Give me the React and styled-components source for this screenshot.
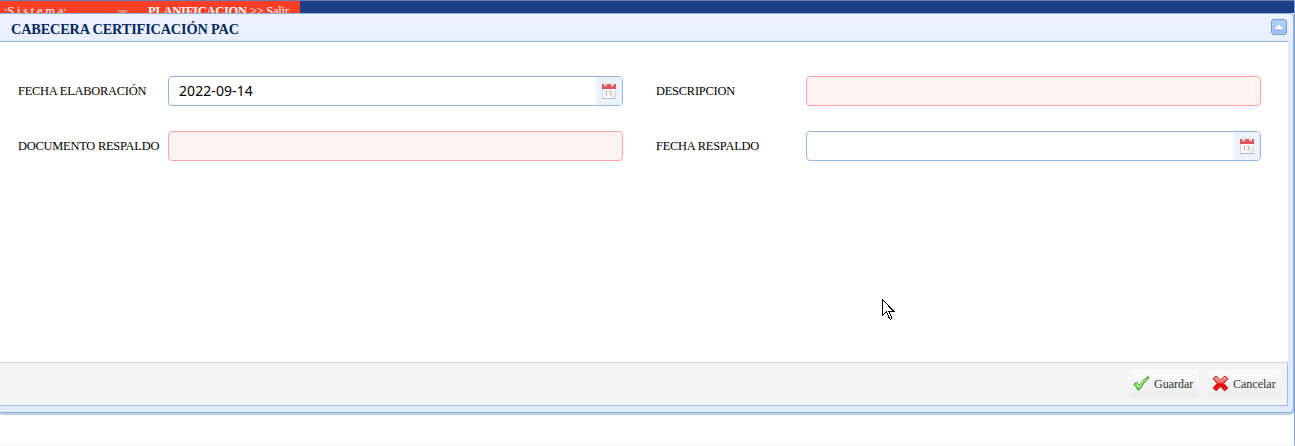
import React from "react";
import styled, { createGlobalStyle } from "styled-components";

const GlobalStyle = createGlobalStyle`
  * { box-sizing: border-box; }
  body { margin: 0; background: #fff; overflow: hidden; font-family: "Liberation Serif", "Times New Roman", serif; }
`;

const Page = styled.div`
  position: relative;
  height: 446px;
  overflow: hidden;
  border-right: 1px solid #7f9fd0;
  border-bottom: 1px solid #f5f5f5;
`;

const TopBar = styled.header`
  height: 13px;
  margin-right: -1px;
  display: flex;
  overflow: hidden;
  background: #1d3f87;
  border-top: 1px solid #6b7fae;
`;

const SystemMenu = styled.div`
  display: flex;
  align-items: flex-start;
  width: 300px;
  padding: 3px 0 0 4px;
  background: #fb3f27;
  color: #fff;
  font-size: 12.5px;
  line-height: 15px;
  white-space: nowrap;
`;

const SystemLabel = styled.span`
  width: 112px;
  letter-spacing: -0.2px;
`;

const Caret = styled.svg`
  width: 11px;
  height: 6px;
  margin: 6px 20px 0 1px;
`;

const ModuleName = styled.span`
  letter-spacing: -0.25px;
`;

const Dialog = styled.section`
  height: 400px;
  margin-right: -1px;
  padding-right: 5px;
  padding-bottom: 6px;
  border: solid #8db2e3;
  border-width: 1px 2px 1px 0;
  border-radius: 0 5px 5px 0;
  background: #dfeaff;
  box-shadow: 0 2px 2px #b9cbd8;
  display: flex;
  flex-direction: column;
`;

const TitleBar = styled.div`
  height: 27px;
  flex: none;
  margin-right: -5px;
  padding: 0 6px 0 11px;
  display: flex;
  justify-content: space-between;
  align-items: center;
  border-radius: 0 4px 0 0;
  background: linear-gradient(#edf3ff, #e7effc);
`;

const Title = styled.h1`
  margin: 2px 0 0;
  font-size: 14.3px;
  letter-spacing: -0.16px;
  line-height: 18px;
  color: #04285c;
  white-space: nowrap;
`;

const CollapseButton = styled.button`
  width: 16px;
  height: 16px;
  margin-top: -1px;
  padding: 0;
  display: flex;
  border: 1px solid #6f9bd3;
  border-radius: 3px;
  background: linear-gradient(#b4d2f7, #91bbed);
  box-shadow: inset 0 0 0 1px #aecdf5;
`;

const Body = styled.div`
  flex: 1;
  background: #fff;
  border-top: 1px solid #8db2e3;
  padding: 34px 26px 0 18px;
`;

const Form = styled.form`
  display: grid;
  grid-template-columns: 605px 605px;
  column-gap: 33px;
  row-gap: 25px;
`;

const Field = styled.div`
  display: flex;
  align-items: center;
  height: 30px;
`;

const Label = styled.label`
  width: 150px;
  flex: none;
  font-size: 12.4px;
  letter-spacing: -0.21px;
  line-height: 16px;
  color: #000;
  white-space: nowrap;
`;

const Control = styled.div`
  display: flex;
  align-items: stretch;
  width: 455px;
  height: 30px;
  overflow: hidden;
  border: 1px solid ${(p) => (p.$required ? "#ffa3a5" : "#91b5e5")};
  border-radius: 4px;
  background: ${(p) => (p.$required ? "#fff2f2" : "#fff")};
`;

const Value = styled.span`
  flex: 1;
  padding-left: 10px;
  font-family: "Noto Sans", "Open Sans", sans-serif;
  font-size: 14px;
  letter-spacing: 0.08px;
  line-height: 28px;
  color: #000;
`;

const CalendarButton = styled.button`
  width: 26px;
  padding: 0 0 0 5px;
  border: 0;
  display: flex;
  align-items: center;
  background: #eaf2ff;
`;

const Footer = styled.footer`
  flex: none;
  height: 44px;
  padding: 0 5px 1px 0;
  display: flex;
  justify-content: flex-end;
  align-items: center;
  gap: 8px;
  background: #f3f3f3;
  border: solid #99bbe8;
  border-width: 1px 1px 1px 0;
  border-top-color: #d9d9d9;
`;

const ActionButton = styled.button`
  width: ${(p) => p.$width}px;
  height: 28px;
  padding: 0 0 0 5px;
  display: flex;
  align-items: center;
  gap: 4px;
  border: 0;
  border-radius: 5px;
  background: linear-gradient(#fbfbfb, #ededed);
  color: #333;
  font: 12px/16px "Liberation Serif", "Times New Roman", serif;
`;

const Pointer = styled.svg`
  position: absolute;
  left: 882px;
  top: 299px;
`;

const CalendarIcon = () => (
  <svg width="16" height="18" viewBox="0 0 16 18">
    <path d="M1 3h14v13H1z" fill="#fafafa" />
    <path d="M1 2h14v5H1z" fill="#e25558" />
    <path d="M1 16h14v1H1z" fill="#bbb7b5" />
    <path d="M1.5 7v9M14.5 7v9" stroke="#dedcdb" strokeWidth="1" />
    <path d="M3 1h3v3H3zM10 1h3v3h-3z" fill="#dedcdd" />
    <path d="M4 3h1v2H4zM11 3h1v2h-1z" fill="#c3a5a9" />
    <path d="M4.5 9.5l1-.5v4.5M7.5 9h3l-1.7 4.5" fill="none" stroke="#b4b4b4" />
    <circle cx="12" cy="13" r="2" fill="#f4f4f4" stroke="#d4d4d4" strokeWidth=".8" />
  </svg>
);

const CheckIcon = () => (
  <svg width="17" height="17" viewBox="0 0 17 17">
    <path d="M.9 9.2 3.7 7.1 6 10.5Q9.5 4.6 15.2 1.5l1.2 1.1Q10.1 7.4 6.9 14.1L5.1 15.2Q3.4 11.6.9 9.2Z" fill="#87e45c" stroke="#329329" strokeLinejoin="round" />
    <path d="m2.7 9 1-.6 2.2 3.4Q9.2 6 13.4 3.4" fill="none" stroke="#caf5a8" />
  </svg>
);

const CrossIcon = () => (
  <svg width="17" height="17" viewBox="0 0 17 17">
    <defs>
      <linearGradient id="cross" x2="0" y2="1">
        <stop stopColor="#ff9b98" />
        <stop offset=".45" stopColor="#f55855" />
        <stop offset=".55" stopColor="#e60000" />
        <stop offset="1" stopColor="#f73030" />
      </linearGradient>
    </defs>
    <path d="m4 1 4.5 4L13 1l3 2.7-4.2 4.7 4.2 4.5-3.2 3-4.3-4.2-4.4 4.2L1 12.8l4.2-4.4L1 3.8Z" fill="url(#cross)" stroke="#ba1c1c" strokeLinejoin="round" />
    <path d="m3.8 2.5 4.7 4 4.6-4" fill="none" stroke="#ffc1bf" />
  </svg>
);

const DateControl = ({ value }) => (
  <Control>
    <Value>{value}</Value>
    <CalendarButton type="button" aria-label="Calendario"><CalendarIcon /></CalendarButton>
  </Control>
);

export default function App() {
  return (
    <Page>
      <GlobalStyle />
      <TopBar>
        <SystemMenu>
          <SystemLabel>:S i s t e m a:</SystemLabel>
          <Caret viewBox="0 0 11 6"><path d="M0 0h11L5.5 6z" fill="#e38b76" /></Caret>
          <ModuleName><b>PLANIFICACION</b> &gt;&gt; Salir</ModuleName>
        </SystemMenu>
      </TopBar>
      <Dialog>
        <TitleBar>
          <Title>CABECERA CERTIFICACIÓN PAC</Title>
          <CollapseButton aria-label="Contraer">
            <svg width="14" height="14" viewBox="0 0 14 14"><path d="M3 9h8V8L7 4.5 3 8z" fill="#fff" /></svg>
          </CollapseButton>
        </TitleBar>
        <Body>
          <Form>
            <Field><Label>FECHA ELABORACIÓN</Label><DateControl value="2022-09-14" /></Field>
            <Field><Label>DESCRIPCION</Label><Control $required /></Field>
            <Field><Label>DOCUMENTO RESPALDO</Label><Control $required /></Field>
            <Field><Label>FECHA RESPALDO</Label><DateControl /></Field>
          </Form>
        </Body>
        <Footer>
          <ActionButton $width={71}><CheckIcon />Guardar</ActionButton>
          <ActionButton $width={75}><CrossIcon />Cancelar</ActionButton>
        </Footer>
      </Dialog>
      <Pointer width="13" height="22" viewBox="0 0 13 22">
        <path d="M.5.5v16l4-4 3 7.2q1.5 1.5 2.4-.6L7 12.5h5z" fill="#fff" stroke="#000" shapeRendering="crispEdges" />
      </Pointer>
    </Page>
  );
}
